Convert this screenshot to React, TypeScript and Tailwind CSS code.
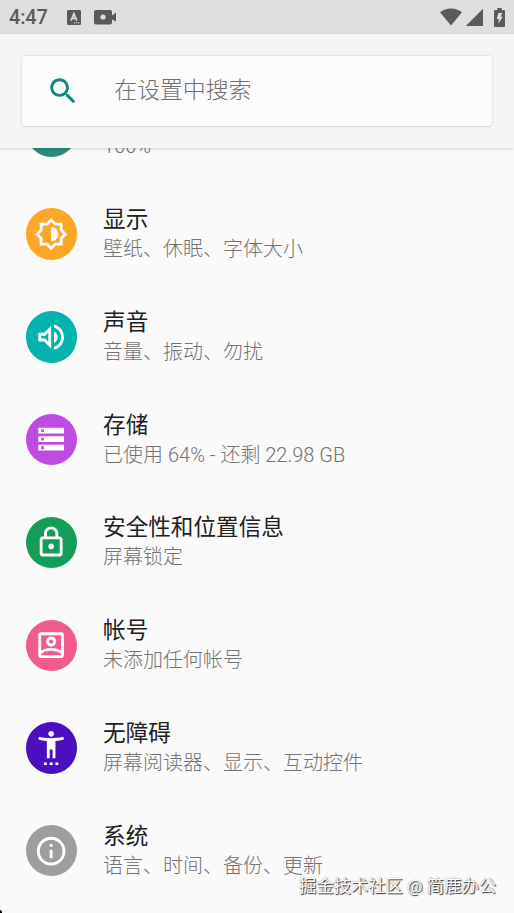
import type { ReactNode } from "react";

type Item = {
  title: string;
  summary: string;
  color: string;
  icon: ReactNode;
};

const items: Item[] = [
  {
    title: "电池",
    summary: "100%",
    color: "bg-[#2a8c80]",
    icon: <path d="M15.67 4H14V2h-4v2H8.33C7.6 4 7 4.6 7 5.33v15.33C7 21.4 7.6 22 8.33 22h7.33c.74 0 1.34-.6 1.34-1.33V5.33C17 4.6 16.4 4 15.67 4z" />,
  },
  {
    title: "显示",
    summary: "壁纸、休眠、字体大小",
    color: "bg-[#fea726]",
    icon: (
      <path d="M20 8.69V4h-4.69L12 .69 8.69 4H4v4.69L.69 12 4 15.31V20h4.69L12 23.31 15.31 20H20v-4.69L23.31 12 20 8.69zm-2 5.79V18h-3.52L12 20.48 9.52 18H6v-3.52L3.52 12 6 9.52V6h3.52L12 3.52 14.48 6H18v3.52L20.48 12 18 14.48zM12 7v10c2.76 0 5-2.24 5-5s-2.24-5-5-5z" />
    ),
  },
  {
    title: "声音",
    summary: "音量、振动、勿扰",
    color: "bg-[#05b3ae]",
    icon: (
      <path d="M3 9v6h4l5 5V4L7 9H3zm7-.17v6.34L7.83 13H5v-2h2.83L10 8.83zM16.5 12c0-1.77-1.02-3.29-2.5-4.03v8.05c1.48-.73 2.5-2.25 2.5-4.02zM14 3.23v2.06c2.89.86 5 3.54 5 6.71s-2.11 5.85-5 6.71v2.06c4.01-.91 7-4.49 7-8.77s-2.99-7.86-7-8.77z" />
    ),
  },
  {
    title: "存储",
    summary: "已使用 64% - 还剩 22.98 GB",
    color: "bg-[#bf4be3]",
    icon: (
      <path
        fillRule="evenodd"
        d="M3 4h18v4H3zM5 5v2h2V5zM3 10h18v4H3zM5 11v2h2v-2zM3 16h18v4H3zM5 17v2h2v-2z"
      />
    ),
  },
  {
    title: "安全性和位置信息",
    summary: "屏幕锁定",
    color: "bg-[#129e58]",
    icon: (
      <path d="M18 8h-1V6c0-2.76-2.24-5-5-5S7 3.24 7 6v2H6c-1.1 0-2 .9-2 2v10c0 1.1.9 2 2 2h12c1.1 0 2-.9 2-2V10c0-1.1-.9-2-2-2zM9 6c0-1.66 1.34-3 3-3s3 1.34 3 3v2H9V6zm9 14H6V10h12v10zm-6-3c1.1 0 2-.9 2-2s-.9-2-2-2-2 .9-2 2 .9 2 2 2z" />
    ),
  },
  {
    title: "帐号",
    summary: "未添加任何帐号",
    color: "bg-[#f15b90]",
    icon: (
      <path d="M19 3H5c-1.11 0-2 .9-2 2v14c0 1.1.89 2 2 2h14c1.1 0 2-.9 2-2V5c0-1.1-.9-2-2-2zm0 2v10.79C16.52 14.37 13.23 14 12 14s-4.52.37-7 1.79V5h14zM5 19v-.77C6.74 16.66 9.32 16 12 16s5.26.66 7 2.23V19H5zM12 13c1.94 0 3.5-1.56 3.5-3.5S13.94 6 12 6 8.5 7.56 8.5 9.5 10.06 13 12 13zm0-5c.83 0 1.5.67 1.5 1.5S12.83 11 12 11s-1.5-.67-1.5-1.5S11.17 8 12 8z" />
    ),
  },
  {
    title: "无障碍",
    summary: "屏幕阅读器、显示、互动控件",
    color: "bg-[#4c0fbf]",
    icon: (
      <path d="M20.5 4c-2.61.7-5.67 1-8.5 1s-5.89-.3-8.5-1L3 6c1.86.5 4 .83 6 1v12h2v-6h2v6h2V7c2-.17 4.14-.5 6-1l-.5-2zM12 4c1.1 0 2-.9 2-2s-.9-2-2-2-2 .9-2 2 .9 2 2 2zM7 24h2v-2H7v2zm4 0h2v-2h-2v2zm4 0h2v-2h-2v2z" />
    ),
  },
  {
    title: "系统",
    summary: "语言、时间、备份、更新",
    color: "bg-[#9e9e9e]",
    icon: (
      <path d="M11 7h2v2h-2zm0 4h2v6h-2zm1-9C6.48 2 2 6.48 2 12s4.48 10 10 10 10-4.48 10-10S17.52 2 12 2zm0 18c-4.41 0-8-3.59-8-8s3.59-8 8-8 8 3.59 8 8-3.59 8-8 8z" />
    ),
  },
];

function StatusBar() {
  return (
    <div className="flex h-[34px] shrink-0 items-center bg-[#dfdfdf] pl-[9px] text-[#5a5a5a]">
      <span className="w-[58px] text-[20px] font-medium leading-[34px] tracking-[-0.2px]">4:47</span>
      <svg className="h-[15px] w-[14px]" viewBox="0 0 14 15">
        <rect width="14" height="15" rx="1.2" fill="currentColor" />
        <path d="M4 10.6 6.9 3.6 9.8 10.6M5.1 8.4h3.6" fill="none" stroke="#dfdfdf" strokeWidth="1.6" />
        <path d="M7 12.8h1.3M9 12.8h1.3M11 12.8h1.3" stroke="#dfdfdf" strokeWidth="1" />
      </svg>
      <svg className="ml-[13px] h-[15px] w-[22px]" viewBox="0 0 22 15">
        <path d="M2 0h14.500q1.500 0 1.500 1.500V5.500l4-3v9l-4-2v3q0 2-2 2H2q-2 0-2-2V2q0-2 2-2z" fill="currentColor" />
        <circle cx="9" cy="7" r="2.600" fill="#dfdfdf" />
      </svg>
      <div className="ml-auto flex items-center pr-[9px]">
        <svg className="h-[18px] w-[22px]" viewBox="0 0 22 18">
          <path d="M11 17.500 0 4.300C3 1.800 7 .5 11 .5s8 1.300 11 3.800z" fill="currentColor" />
        </svg>
        <svg className="ml-[3px] h-[18px] w-[18px]" viewBox="0 0 18 18">
          <path d="M18 .8V18H.8z" fill="currentColor" />
        </svg>
        <svg className="ml-[11px] h-[19px] w-[11px]" viewBox="0 0 11 19">
          <path d="M3.300 0h4.400v2H10q1 0 1 1v15q0 1-1 1H1q-1 0-1-1V3q0-1 1-1h2.300z" fill="currentColor" />
          <path d="M4.500 5h3.700L6.700 8.700h2.100L4.200 16l.7-5H2.700z" fill="#dfdfdf" />
        </svg>
      </div>
    </div>
  );
}

function SearchBar() {
  return (
    <div className="z-10 h-[114px] shrink-0 bg-[#f5f5f5] px-[22px] pt-[22px] shadow-[0_1px_3px_rgba(0,0,0,0.18)]">
      <div className="flex h-[70px] items-center rounded-[3px] bg-[#fbfbfb] pl-[24px] shadow-[0_0_2px_rgba(0,0,0,0.22),0_1px_1px_rgba(0,0,0,0.06)]">
        <svg className="size-[34.300px] fill-[#0f887a]" viewBox="0 0 24 24">
          <path d="M15.5 14h-.79l-.28-.27C15.41 12.59 16 11.11 16 9.5 16 5.91 13.09 3 9.5 3S3 5.91 3 9.5 5.91 16 9.5 16c1.61 0 3.09-.59 4.230-1.570l.27.28v.79l5 4.990L20.490 19l-4.990-5zm-6 0C7.010 14 5 11.990 5 9.500S7.010 5 9.500 5 14 7.010 14 9.500 11.990 14 9.500 14z" />
        </svg>
        <span className="ml-[34px] text-[22.850px] font-light text-[#6f6f6f]">在设置中搜索</span>
      </div>
    </div>
  );
}

function Row({ item }: { item: Item }) {
  return (
    <div className="flex h-[102.800px] items-center pl-[25.700px]">
      <div className={`grid size-[51.400px] place-items-center rounded-full ${item.color}`}>
        <svg className="size-[34.300px] fill-white" viewBox="0 0 24 24">
          {item.icon}
        </svg>
      </div>
      <div className="ml-[26px] whitespace-nowrap">
        <p className="text-[22.600px] leading-[30px] text-[#212121]">{item.title}</p>
        <p className="text-[20px] font-light leading-[28px] text-[#737373]">{item.summary}</p>
      </div>
    </div>
  );
}

export default function App() {
  return (
    <div className="relative flex h-[913px] w-[514px] flex-col overflow-hidden bg-[#fafafa] font-[Roboto,'Noto_Sans_CJK_SC',sans-serif]">
      <StatusBar />
      <SearchBar />
      <div className="min-h-0 flex-1 overflow-hidden">
        <div className="-mt-[68.200px]">
          {items.map((item) => (
            <Row key={item.title} item={item} />
          ))}
        </div>
      </div>
      <div className="absolute bottom-[14px] right-[18px] whitespace-nowrap text-[17.300px] leading-[26px] text-white [text-shadow:1px_1px_1px_#333,0_0_1px_#777]">
        掘金技术社区 @ 简鹿办公
      </div>
      <div className="absolute bottom-0 left-0 h-[3px] w-[2px] rounded-tr-full bg-black" />
    </div>
  );
}
